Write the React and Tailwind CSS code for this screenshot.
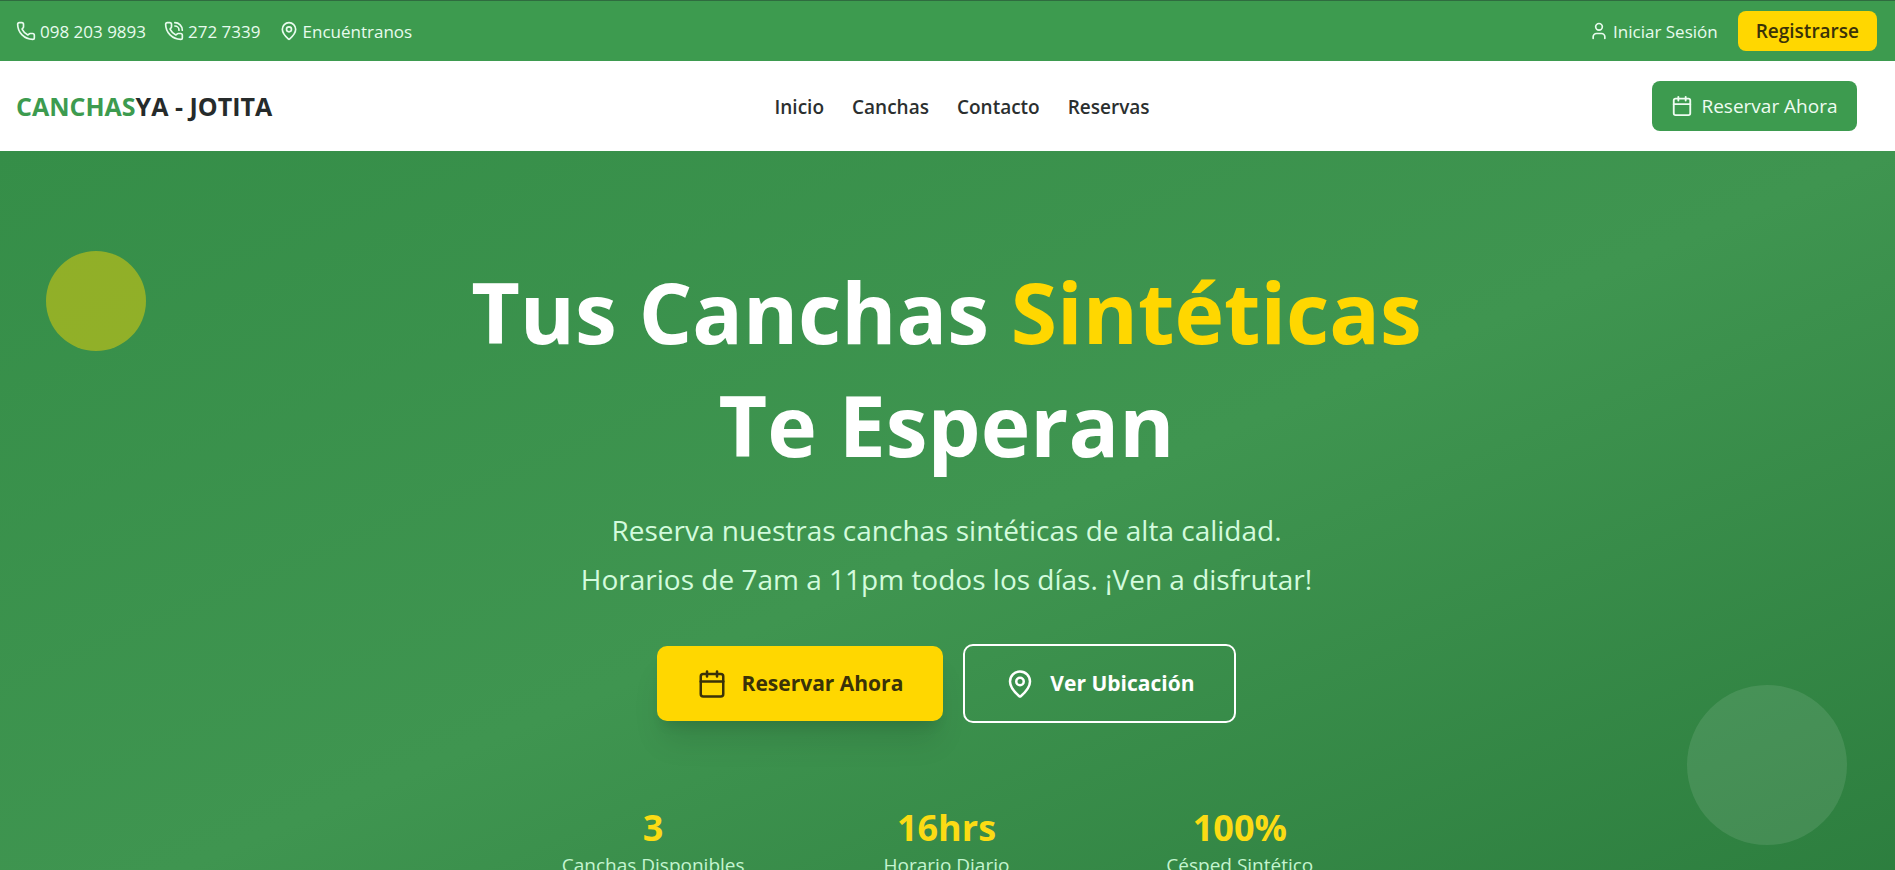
import React from 'react';
import { Calendar, MapPin, Phone, PhoneCall, User } from 'lucide-react';

const navLinks = [
  { label: 'Inicio', href: '#inicio' },
  { label: 'Canchas', href: '#canchas' },
  { label: 'Contacto', href: '#contacto' },
  { label: 'Reservas', href: '#reservas' },
];

const contactLinks = [
  { label: '098 203 9893', href: 'tel:0982039893', icon: Phone },
  { label: '272 7339', href: 'tel:2727339', icon: PhoneCall },
  { label: 'Encuéntranos', href: '#ubicacion', icon: MapPin },
];

const stats = [
  { value: '3', label: 'Canchas Disponibles' },
  { value: '16hrs', label: 'Horario Diario' },
  { value: '100%', label: 'Césped Sintético' },
];

const TopBar = () => (
  <div className="flex items-center justify-between border-t border-[#2f6b3f] bg-[#3d9b4f] py-[10px] pr-[18px] pl-4 text-[#e8fbee]">
    <div className="flex items-center gap-[18px] text-[17px]">
      {contactLinks.map(({ label, href, icon: Icon }) => (
        <a key={label} href={href} className="flex items-center gap-1">
          <Icon size={20} />
          <span className="pt-0.5">{label}</span>
        </a>
      ))}
    </div>

    <div className="flex items-center gap-5">
      <a href="#login" className="flex items-center gap-1 text-[17px]">
        <User size={20} />
        <span className="pt-0.5">Iniciar Sesión</span>
      </a>
      <button className="h-10 rounded-lg bg-[#ffd700] px-[18px] text-[19px] font-semibold text-[#3a3208]">
        Registrarse
      </button>
    </div>
  </div>
);

const Header = () => (
  <header className="flex h-[90px] items-center justify-between bg-white pr-[38px] pl-4">
    <a href="#inicio" className="pt-0.5 text-[25px] font-bold text-[#262b2b]">
      <span className="text-[#3d9b4f]">CANCHAS</span>YA - JOTITA
    </a>

    <nav className="flex gap-7 pt-0.5">
      {navLinks.map((link) => (
        <a key={link.label} href={link.href} className="text-[19px] font-semibold text-[#2b2f2f]">
          {link.label}
        </a>
      ))}
    </nav>

    <button className="flex h-[50px] w-[205px] items-center justify-center gap-2 rounded-lg bg-[#3d9b4f] text-[19px] text-[#effcf2]">
      <Calendar size={22} />
      Reservar Ahora
    </button>
  </header>
);

const Hero = () => (
  <section className="relative overflow-hidden bg-linear-to-br from-[#358e48] via-[#3f9550] to-[#2b7c3d] pt-[104px] pb-[67px] text-center">
    {/* Decorative circles */}
    <div className="absolute top-[100px] left-[46px] h-[100px] w-[100px] rounded-full bg-[#ffd700] opacity-45" />
    <div className="absolute right-12 bottom-[100px] h-40 w-40 rounded-full bg-white opacity-10" />

    <div className="relative pr-0.5">
      <h1 className="text-[84px] leading-[113px] font-bold text-white">
        Tus Canchas <span className="text-[#ffd700]">Sintéticas</span>
        <br />
        Te Esperan
      </h1>

      <p className="mt-[25px] text-[28px] leading-[49px] text-[#d3fbdd]">
        Reserva nuestras canchas sintéticas de alta calidad.
        <br />
        Horarios de 7am a 11pm todos los días. ¡Ven a disfrutar!
      </p>

      {/* Actions */}
      <div className="mt-10 flex items-center justify-center gap-5">
        <button className="flex h-[75px] items-center gap-[15px] rounded-[10px] bg-[#ffd700] px-10 text-[21px] font-bold text-[#3a3208] shadow-[0_25px_31px_-6px_rgba(0,0,0,0.1),0_10px_12px_-6px_rgba(0,0,0,0.1)]">
          <Calendar size={30} />
          Reservar Ahora
        </button>
        <button className="flex h-[79px] items-center gap-[15px] rounded-[10px] border-2 border-white px-10 text-[21px] font-bold text-white">
          <MapPin size={30} />
          Ver Ubicación
        </button>
      </div>

      {/* Stats */}
      <div className="mx-auto mt-20 grid max-w-[880px] grid-cols-3">
        {stats.map((stat) => (
          <div key={stat.label}>
            <div className="text-[36px] leading-[50px] font-bold text-[#fbdb14]">{stat.value}</div>
            <div className="text-[19px] leading-[25px] text-[#c4f5d0]">{stat.label}</div>
          </div>
        ))}
      </div>
    </div>
  </section>
);

const App = () => (
  <div className="min-h-screen bg-white font-['Open_Sans','Noto_Sans',sans-serif]">
    <TopBar />
    <Header />
    <Hero />
  </div>
);

export default App;
